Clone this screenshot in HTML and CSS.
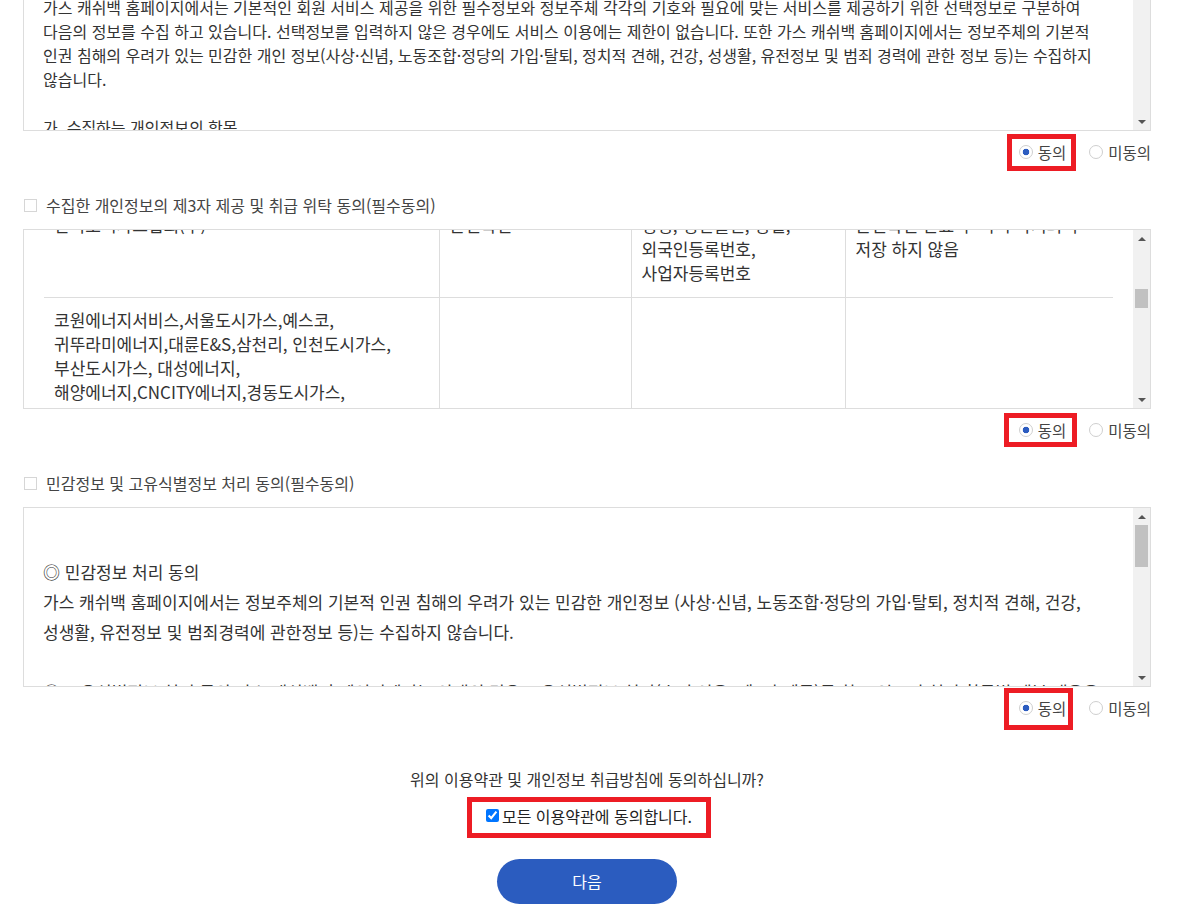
FILE: index.html
```html
<!DOCTYPE html>
<html lang="ko">
<head>
<meta charset="utf-8">
<title>약관 동의</title>
<link rel="stylesheet" href="styles.css">
</head>
<body>
<main class="terms">

  <section class="agree-block">
    <label class="agree-title"><input type="checkbox" class="chk"><span>개인정보 수집 및 이용 동의(필수동의)</span></label>
    <div class="term-box">
      <div class="term-body">
        <div class="box-text">
          <p>1. 수집하는 개인정보의 항목 및 수집방법<br>
          가스 캐쉬백 홈페이지에서는 기본적인 회원 서비스 제공을 위한 필수정보와 정보주체 각각의 기호와 필요에 맞는 서비스를 제공하기 위한 선택정보로 구분하여 다음의 정보를 수집 하고 있습니다. 선택정보를 입력하지 않은 경우에도 서비스 이용에는 제한이 없습니다. 또한 가스 캐쉬백 홈페이지에서는 정보주체의 기본적 인권 침해의 우려가 있는 민감한 개인 정보(사상·신념, 노동조합·정당의 가입·탈퇴, 정치적 견해, 건강, 성생활, 유전정보 및 범죄 경력에 관한 정보 등)는 수집하지 않습니다.</p>
          <p>가. 수집하는 개인정보의 항목<br>
          - 필수항목 : 이름, 아이디, 비밀번호, 생년월일, 휴대전화번호, 이메일, 주소<br>
          - 선택항목 : 도시가스 고객번호, 가스사용량 정보, 마케팅 정보 수신 동의 여부<br>
          - 서비스 이용 과정에서 자동 생성되는 정보 : 접속 IP 정보, 쿠키, 서비스 이용기록, 접속 로그</p>
          <p>나. 개인정보 수집방법<br>
          - 홈페이지 회원가입, 캐쉬백 신청, 고객센터 문의, 이벤트 응모</p>
          <p>2. 개인정보의 수집 및 이용목적<br>
          가스 캐쉬백 홈페이지는 수집한 개인정보를 다음의 목적을 위해 활용합니다.<br>
          - 회원관리 : 회원제 서비스 이용에 따른 본인확인, 개인식별, 부정이용 방지, 가입의사 확인, 고지사항 전달<br>
          - 서비스 제공 : 가스 절감량 산정, 캐쉬백 지급 및 정산, 포인트 적립 내역 안내<br>
          - 마케팅 및 광고에 활용 : 이벤트 등 광고성 정보 전달, 접속 빈도 파악, 서비스 이용에 대한 통계</p>
          <p>3. 개인정보의 보유 및 이용기간<br>
          원칙적으로 개인정보 수집 및 이용목적이 달성된 후에는 해당 정보를 지체 없이 파기합니다.<br>
          단, 관계법령의 규정에 의하여 보존할 필요가 있는 경우 아래와 같이 관계법령에서 정한 일정한 기간 동안 보관합니다.<br>
          - 계약 또는 청약철회 등에 관한 기록 : 5년<br>
          - 대금결제 및 재화 등의 공급에 관한 기록 : 5년<br>
          - 소비자의 불만 또는 분쟁처리에 관한 기록 : 3년<br>
          - 웹사이트 방문기록 : 3개월</p>
          <p>4. 동의를 거부할 권리 및 동의 거부 시 불이익<br>
          정보주체는 개인정보 수집 및 이용에 대한 동의를 거부할 권리가 있습니다.<br>
          다만, 필수항목에 대한 동의를 거부할 경우 회원가입 및 캐쉬백 서비스 이용이 제한됩니다.</p>
          <p>5. 개인정보 보호책임자<br>
          개인정보 처리에 관한 문의는 가스 캐쉬백 고객센터로 연락 주시기 바랍니다.<br>
          - 고객센터 운영시간 : 평일 09:00 ~ 18:00 (주말 및 공휴일 휴무)</p>
        </div>
      </div>
      <div class="scrollbar"><span class="sb-btn sb-up"></span><div class="sb-track"><span class="sb-thumb"></span></div><span class="sb-btn sb-down"></span></div>
    </div>
    <div class="agree-radios">
      <label class="radio mark mark--1"><input type="radio" name="agree1" checked><span>동의</span></label>
      <label class="radio"><input type="radio" name="agree1"><span>미동의</span></label>
    </div>
  </section>

  <section class="agree-block">
    <label class="agree-title"><input type="checkbox" class="chk"><span>수집한 개인정보의 제3자 제공 및 취급 위탁 동의(필수동의)</span></label>
    <div class="term-box term-box--table">
      <div class="term-body">
        <div class="table-wrap">
          <table class="share-table">
            <colgroup>
              <col class="c1"><col class="c2"><col class="c3"><col class="c4">
            </colgroup>
            <thead>
              <tr><th>제공받는 자</th><th>제공 목적</th><th>제공 항목</th><th>보유 및 이용기간</th></tr>
            </thead>
            <tbody>
              <tr>
                <td>한국에너지공단,<br>한국가스공사,<br>한국도시가스협회,<br>코원에너지서비스,<br>서울도시가스,<br>예스코,<br>귀뚜라미에너지,<br>대륜E&amp;S,<br>삼천리,<br>인천도시가스,<br>부산도시가스,<br>대성에너지</td>
                <td>캐쉬백 대상자 확인 및 가스 절감량 산정</td>
                <td>성명, 고객번호, 주소, 가스사용량</td>
                <td>캐쉬백 지급 완료 후 5년</td>
              </tr>
              <tr>
                <td>한국도시가스협회(주)</td>
                <td>본인확인</td>
                <td>성명, 생년월일, 성별, 외국인등록번호, 사업자등록번호</td>
                <td>본인확인 완료 후 즉시 파기되며<br>저장 하지 않음</td>
              </tr>
              <tr class="row-anchor row-mid">
                <td>코원에너지서비스,서울도시가스,예스코,<br>귀뚜라미에너지,대륜E&amp;S,삼천리, 인천도시가스,<br>부산도시가스, 대성에너지,<br>해양에너지,CNCITY에너지,경동도시가스,<br>전북도시가스, 충남도시가스, 참빛도시가스,<br>영남에너지서비스, 서라벌도시가스,<br>강원도시가스, 참빛충북도시가스,<br>제주도시가스, 전남도시가스,<br>충청에너지서비스, 미래엔서해에너지,<br>지에스이, 군산도시가스,<br>영동도시가스, 한양에너지,<br>대화도시가스, 중부도시가스,<br>세종에너지, 청주도시가스,<br>목포도시가스, 경남에너지,<br>부산도시가스 울산지사,<br>충북도시가스, 전주도시가스</td>
                <td>가스요금 캐쉬백 지급 및 정산</td>
                <td>성명, 고객번호, 주소, 가스사용량, 계좌정보</td>
                <td>회원 탈퇴 시 또는 위탁계약 종료 시까지</td>
              </tr>
              <tr>
                <td>(주)케이티,<br>에스케이텔레콤(주),<br>(주)엘지유플러스,<br>나이스평가정보(주),<br>코리아크레딧뷰로(주),<br>(주)드림시큐리티,<br>(주)한국모바일인증,<br>NICE평가정보(주),<br>(주)다날,<br>(주)케이지모빌리언스</td>
                <td>휴대전화 본인인증</td>
                <td>성명, 생년월일, 성별, 휴대전화번호, 통신사</td>
                <td>본인인증 완료 시까지</td>
              </tr>
              <tr>
                <td>(주)가스캐쉬백운영센터,<br>(주)케이에스넷,<br>(주)한국정보통신,<br>(주)비즈톡,<br>(주)스마트메시지,<br>(주)엠앤와이즈,<br>(주)인포뱅크,<br>(주)다우기술</td>
                <td>시스템 운영 및 안내 메시지 발송</td>
                <td>성명, 휴대전화번호, 이메일</td>
                <td>위탁계약 종료 시까지</td>
              </tr>
            </tbody>
          </table>
        </div>
      </div>
      <div class="scrollbar"><span class="sb-btn sb-up"></span><div class="sb-track"><span class="sb-thumb"></span></div><span class="sb-btn sb-down"></span></div>
    </div>
    <div class="agree-radios">
      <label class="radio mark mark--2"><input type="radio" name="agree2" checked><span>동의</span></label>
      <label class="radio"><input type="radio" name="agree2"><span>미동의</span></label>
    </div>
  </section>

  <section class="agree-block">
    <label class="agree-title"><input type="checkbox" class="chk"><span>민감정보 및 고유식별정보 처리 동의(필수동의)</span></label>
    <div class="term-box">
      <div class="term-body">
        <div class="box-text box-text--wide">
          <p>◎ 민감정보 처리 동의<br>
          가스 캐쉬백 홈페이지에서는 정보주체의 기본적 인권 침해의 우려가 있는 민감한 개인정보 (사상·신념, 노동조합·정당의 가입·탈퇴, 정치적 견해, 건강, 성생활, 유전정보 및 범죄경력에 관한정보 등)는 수집하지 않습니다.</p>
          <p>◎ 고유식별정보 처리 동의 가스 캐쉬백 홈페이지에서는 아래의 경우 고유식별정보 처리(수집·이용, 제3자 제공)를 하고 있으며 처리 항목별 세부 내용은 다음과 같습니다.</p>
          <p>- 수집·이용 목적 : 본인확인 및 도시가스 사용자 확인<br>
          - 처리 항목 : 외국인등록번호, 사업자등록번호<br>
          - 보유 및 이용기간 : 확인 즉시 파기</p>
          <p>◎ 동의 거부 권리 및 동의 거부 시 불이익<br>
          정보주체는 민감정보 및 고유식별정보 처리에 대한 동의를 거부할 권리가 있으며, 동의를 거부할 경우 가스 캐쉬백 서비스 이용이 제한될 수 있습니다.</p>
          <p>◎ 고유식별정보의 안전성 확보 조치<br>
          가스 캐쉬백 홈페이지는 고유식별정보를 암호화하여 안전하게 처리하며, 접근 권한을 최소한의 인원으로 제한하고 있습니다.</p>
          <p>위 내용을 충분히 이해하였으며 민감정보 및 고유식별정보 처리에 동의합니다.</p>
        </div>
      </div>
      <div class="scrollbar"><span class="sb-btn sb-up"></span><div class="sb-track"><span class="sb-thumb"></span></div><span class="sb-btn sb-down"></span></div>
    </div>
    <div class="agree-radios">
      <label class="radio mark mark--3"><input type="radio" name="agree3" checked><span>동의</span></label>
      <label class="radio"><input type="radio" name="agree3"><span>미동의</span></label>
    </div>
  </section>

  <section class="confirm">
    <p class="confirm-q">위의 이용약관 및 개인정보 취급방침에 동의하십니까?</p>
    <div class="confirm-row">
      <label class="confirm-all mark mark--all"><input type="checkbox" checked><span>모든 이용약관에 동의합니다.</span></label>
    </div>
    <button type="button" class="btn-next">다음</button>
  </section>

</main>
<script src="script.js"></script>
</body>
</html>
```

FILE: styles.css
```css
html, body {
  margin: 0;
  overflow: hidden;
}

body {
  font-family: "Noto Sans CJK KR", "Noto Sans KR", "Malgun Gothic", sans-serif;
  font-size: 16px;
  color: #333;
  background: #fff;
}

.terms {
  width: 1128px;
  margin: -85px 0 0 23px;
}

.agree-block + .agree-block {
  margin-top: 29px;
}

.agree-title {
  display: flex;
  align-items: center;
  gap: 9px;
  height: 24px;
  line-height: 24px;
  padding-left: 1px;
  color: #444;
}

.chk {
  appearance: none;
  -webkit-appearance: none;
  width: 13px;
  height: 13px;
  margin: 0;
  border: 1px solid #d6d6d6;
  background: #fff;
}

/* scroll box with a drawn scrollbar */
.term-box {
  display: flex;
  height: 180px;
  box-sizing: border-box;
  margin-top: 12px;
  border: 1px solid #ddd;
  word-break: keep-all;
}

.term-body {
  flex: 1;
  min-width: 0;
  overflow: hidden;
}

.scrollbar {
  display: flex;
  flex-direction: column;
  width: 17px;
  flex: none;
  background: #f1f1f1;
}

.sb-btn {
  display: flex;
  align-items: center;
  justify-content: center;
  height: 17px;
  flex: none;
}

.sb-up::before,
.sb-down::before {
  content: "";
  border-left: 4px solid transparent;
  border-right: 4px solid transparent;
}

.sb-up::before {
  border-bottom: 4px solid #555;
}

.sb-down::before {
  border-top: 4px solid #555;
}

.sb-track {
  position: relative;
  flex: 1;
}

.sb-thumb {
  position: absolute;
  left: 2px;
  right: 2px;
  top: 0;
  height: 20px;
  background: #c1c1c1;
}

/* policy texts */
.box-text {
  padding: 19px;
  font-size: 16px;
  line-height: 24px;
}

.box-text p {
  margin: 0;
}

.box-text p + p {
  margin-top: 24px;
}

.box-text--wide {
  padding-top: 49px;
  font-size: 17px;
  line-height: 30px;
}

.box-text--wide p + p {
  margin-top: 30px;
}

/* third party table */
.table-wrap {
  padding: 20px;
}

.share-table {
  width: 100%;
  border-collapse: collapse;
  table-layout: fixed;
  font-size: 17px;
  line-height: 24px;
}

.share-table .c1 { width: 395px; }
.share-table .c2 { width: 192px; }
.share-table .c3 { width: 214px; }

.share-table th,
.share-table td {
  padding: 10px 10px 12px;
  border-top: 1px solid #ddd;
  border-bottom: 1px solid #ddd;
  text-align: left;
  vertical-align: top;
  font-weight: normal;
}

.share-table th {
  background: #f7f7f7;
  color: #222;
}

.share-table th + th,
.share-table td + td {
  border-left: 1px solid #ddd;
}

.share-table .row-mid td + td {
  vertical-align: middle;
}

/* agree / disagree radios */
.agree-radios {
  display: flex;
  justify-content: flex-end;
  gap: 23px;
  height: 24px;
  margin-top: 9px;
}

.radio {
  position: relative;
  display: inline-flex;
  align-items: center;
  gap: 5px;
  font-size: 15.5px;
  line-height: 24px;
  color: #444;
}

.radio input {
  appearance: none;
  -webkit-appearance: none;
  width: 14px;
  height: 14px;
  margin: 0;
  border: 1px solid #cfcfcf;
  border-radius: 50%;
  background: #fff;
}

.radio input:checked {
  background: radial-gradient(circle, #2c5cc0 0 3px, #fff 3.6px);
}

/* red highlight frames */
.mark::after {
  content: "";
  position: absolute;
  border: 5px solid #ed1c24;
  pointer-events: none;
}

.mark--1::after { left: -12px; right: -10px; top: -6px; bottom: -7px; }
.mark--2::after { left: -15px; right: -11px; top: -5px; bottom: -5px; }
.mark--3::after { left: -15px; right: -7px; top: -8px; bottom: -10px; }
.mark--all::after { left: -15px; right: -19px; top: -7px; bottom: -10px; }

/* final confirmation */
.confirm {
  margin-top: 47px;
  text-align: center;
}

.confirm-q {
  margin: 0;
  line-height: 24px;
  color: #333;
}

.confirm-row {
  margin-top: 12px;
}

.confirm-all {
  position: relative;
  display: inline-flex;
  align-items: center;
  line-height: 24px;
  color: #222;
}

.confirm-all input {
  width: 13px;
  height: 13px;
  margin: 3px 3px 3px 4px;
}

.btn-next {
  display: block;
  width: 180px;
  height: 45px;
  margin: 31px auto 0;
  border: 0;
  border-radius: 23px;
  background: #2b5cbf;
  color: #fff;
  font-family: inherit;
  font-size: 16px;
}
```

FILE: script.js
```js
(function () {
  function alignTable() {
    var body = document.querySelector('.term-box--table .term-body');
    var row = document.querySelector('.share-table .row-anchor td');
    if (!body || !row) return;
    body.scrollTop = 0;
    var offset = row.getBoundingClientRect().top - body.getBoundingClientRect().top;
    body.scrollTop = Math.round(offset - 68);
  }

  function syncBars() {
    var boxes = document.querySelectorAll('.term-box');
    for (var i = 0; i < boxes.length; i++) {
      var body = boxes[i].querySelector('.term-body');
      var track = boxes[i].querySelector('.sb-track');
      var thumb = boxes[i].querySelector('.sb-thumb');
      var trackH = track.clientHeight;
      var h = Math.max(Math.round(trackH * body.clientHeight / body.scrollHeight), 17);
      var max = body.scrollHeight - body.clientHeight;
      var top = max > 0 ? Math.round((trackH - h) * body.scrollTop / max) : 0;
      thumb.style.height = h + 'px';
      thumb.style.top = top + 'px';
    }
  }

  function run() {
    alignTable();
    syncBars();
  }

  run();
  window.addEventListener('load', run);
})();
```
